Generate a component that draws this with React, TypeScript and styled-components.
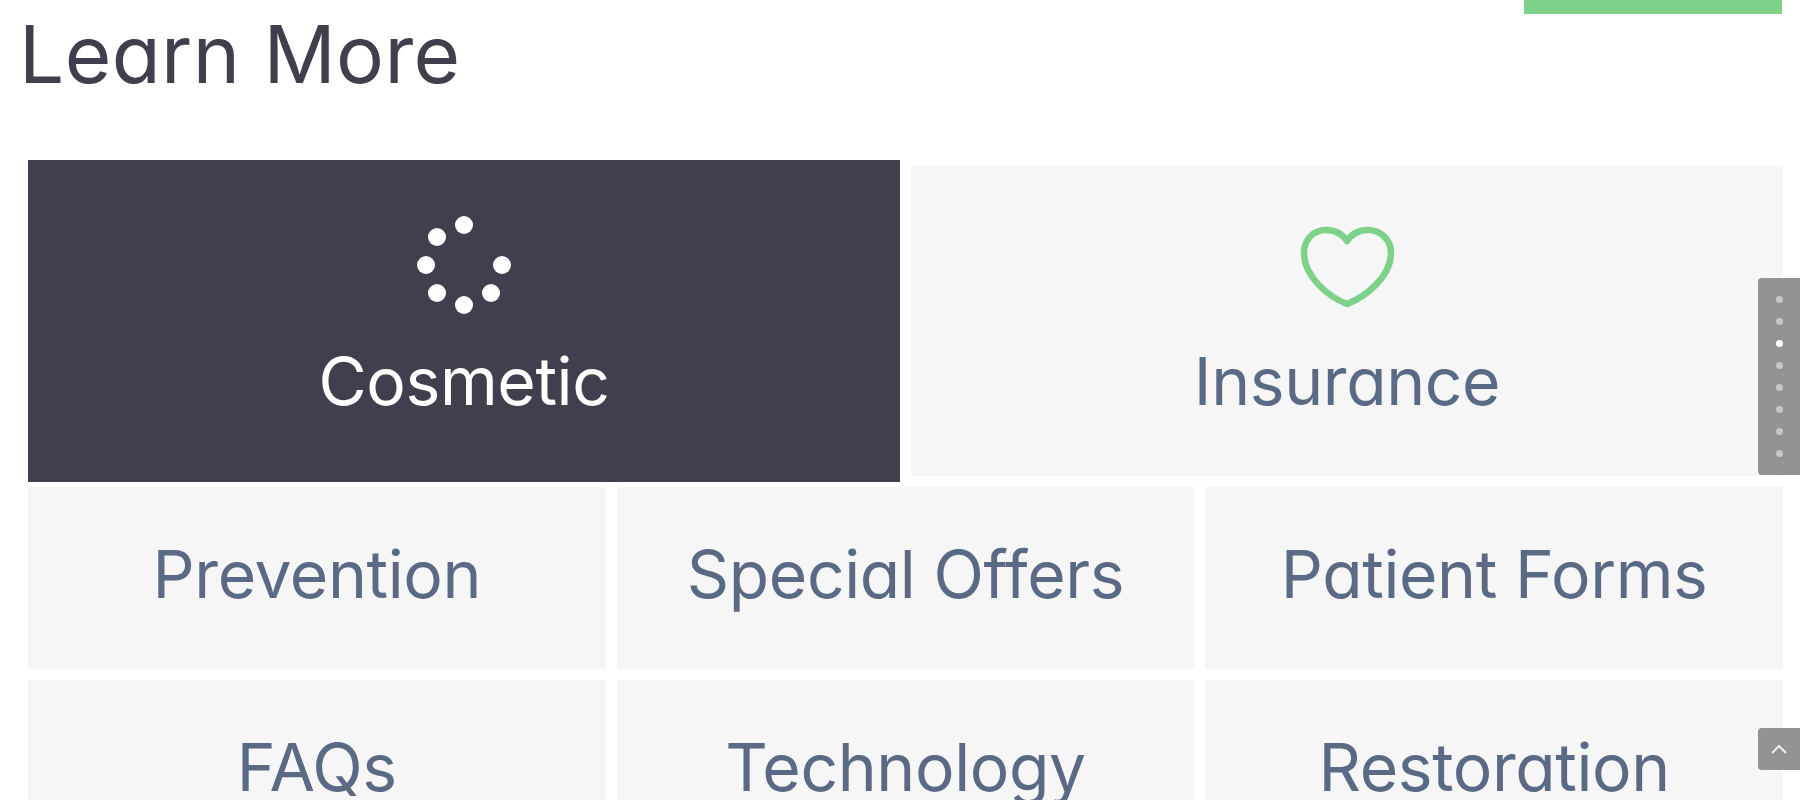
import React, { FC } from 'react'
import styled, { createGlobalStyle } from 'styled-components'

const GlobalStyle = createGlobalStyle`
    html, body {
        margin: 0;
        height: 800px;
        overflow: hidden;
        background: #fff;
    }
    body {
        font-family: Inter, "Liberation Sans", sans-serif;
        font-feature-settings: 'cv11' 1;
    }
`

const Page = styled.div`
    width: 1800px;
    height: 800px;
    overflow: hidden;
`

const Header = styled.header`
    display: flex;
    justify-content: space-between;
    align-items: flex-start;
    height: 166px;
    padding: 0 18px 0 19px;
    box-sizing: border-box;
`

const Title = styled.h2`
    margin: 0;
    padding-top: 6px;
    font-size: 80px;
    line-height: 96px;
    font-weight: 400;
    letter-spacing: 0.4px;
    color: #413f4d;
`

const GreenBar = styled.div`
    width: 258px;
    height: 14px;
    background: #7dd189;
`

const Grid = styled.div`
    display: grid;
    grid-template-columns: repeat(6, 1fr);
    grid-template-rows: 310px 182px 182px;
    gap: 11px;
    margin: 0 17px 0 28px;
`

const Card = styled.a<{ $span: number; $active?: boolean }>`
    grid-column: span ${p => p.$span};
    display: flex;
    flex-direction: column;
    align-items: center;
    justify-content: center;
    padding-bottom: 8px;
    box-sizing: border-box;
    font-size: 66px;
    font-weight: 400;
    letter-spacing: -0.4px;
    color: ${p => (p.$active ? '#fff' : '#5a6a85')};
    background: ${p => (p.$active ? '#413f4d' : '#f6f6f6')};
    margin: ${p => (p.$active ? '-6px 0' : '0')};
`

const CardIcon = styled.svg`
    display: block;
    overflow: visible;
    margin-bottom: 28px;
`

const SideNav = styled.nav`
    position: fixed;
    top: 278px;
    right: 0;
    width: 42px;
    height: 197px;
    padding-top: 18px;
    box-sizing: border-box;
    display: flex;
    flex-direction: column;
    align-items: center;
    gap: 15px;
    background: #939393;
    border-radius: 4px 0 0 4px;
`

const NavDot = styled.span<{ $active?: boolean }>`
    width: 7px;
    height: 7px;
    border-radius: 50%;
    background: ${p => (p.$active ? '#fff' : '#c6c6c6')};
`

const TopButton = styled.button`
    position: fixed;
    top: 728px;
    right: 0;
    width: 42px;
    height: 42px;
    padding: 0;
    border: none;
    display: flex;
    align-items: center;
    justify-content: center;
    background: #939393;
    border-radius: 4px 0 0 4px;
`

const Spinner: FC = () => {
    const dots = [
        [464, 224],
        [437, 236],
        [426, 264],
        [437, 292],
        [464, 304],
        [491, 292],
        [502, 264],
    ]
    return (
        <CardIcon width="100" height="100" viewBox="414 212 100 100">
            {dots.map(([cx, cy]) => (
                <circle key={`${cx}-${cy}`} cx={cx} cy={cy} r="9" fill="#fff" />
            ))}
        </CardIcon>
    )
}

const Heart: FC = () => (
    <CardIcon width="100" height="100" viewBox="26 14 100 100">
        <path
            d="M76 42 C72 36 65 31 55 31 C42 31 33 41 33 54 C33 78 58 98 76 105 C94 98 120 78 120 54 C120 41 110 31 97 31 C87 31 80 36 76 42 Z"
            fill="none"
            stroke="#7dd189"
            strokeWidth="6.5"
            strokeLinejoin="round"
        />
    </CardIcon>
)

const links = ['Prevention', 'Special Offers', 'Patient Forms', 'FAQs', 'Technology', 'Restoration']

const App: FC = () => (
    <Page>
        <GlobalStyle />
        <Header>
            <Title>Learn More</Title>
            <GreenBar />
        </Header>
        <Grid>
            <Card $span={3} $active>
                <Spinner />
                Cosmetic
            </Card>
            <Card $span={3}>
                <Heart />
                Insurance
            </Card>
            {links.map(label => (
                <Card key={label} $span={2}>
                    {label}
                </Card>
            ))}
        </Grid>
        <SideNav>
            {[0, 1, 2, 3, 4, 5, 6, 7].map(i => (
                <NavDot key={i} $active={i === 2} />
            ))}
        </SideNav>
        <TopButton aria-label="Back to top">
            <svg width="18" height="12" viewBox="0 0 18 12">
                <path d="M2 10 L9 3 L16 10" fill="none" stroke="#eee" strokeWidth="2" />
            </svg>
        </TopButton>
    </Page>
)

export default App
